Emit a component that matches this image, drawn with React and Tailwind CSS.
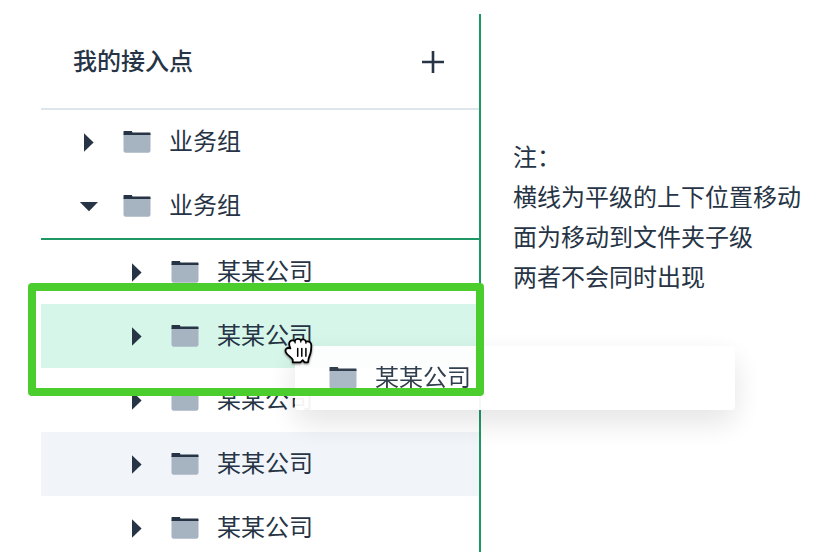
import React from "react";

function Folder() {
  return (
    <svg className="block h-6 w-7 shrink-0" viewBox="0 0 28 24">
      <path d="M.5 4H27.5V20.5Q27.5 22.7 25.3 22.7H2.7Q.5 22.7 .5 20.5Z" fill="#a6b4c2" />
      <path d="M.5 5V1.5Q.5 1 1 1H8.8L9.5 2.5H27Q27.5 2.5 27.5 3V5Z" fill="#263445" />
    </svg>
  );
}

function Arrow({ open }) {
  return (
    <svg className="block h-5 w-5 shrink-0" viewBox="0 0 20 20">
      <path d={open ? "M.8 6H19L10 15.2Z" : "M5 1.2L14.6 10.5L5 19.8Z"} fill="#263445" />
    </svg>
  );
}

function Row({ label, nested, open, tone = "" }) {
  return (
    <div className={`flex h-16 shrink-0 items-center ${nested ? "pl-[86px]" : "pl-[38px]"} ${tone}`}>
      <Arrow open={open} />
      <span className="ml-6"><Folder /></span>
      <span className="ml-[18px] whitespace-nowrap pb-1 leading-8">{label}</span>
    </div>
  );
}

function Hand() {
  return (
    <svg className="absolute left-[282px] top-[334px] h-9 w-9 drop-shadow-[0_1px_1px_rgba(0,0,0,0.5)]" viewBox="0 0 36 36">
      <path
        d="M10.8 28.3V25.9C9.6 23.5 7 22.3 5 20C3.3 18 3.1 16.2 4.2 14.9C5.2 13.8 6.8 13.8 8.4 14.4C7.3 12.2 6.7 9.9 7.6 8.2C8.5 6.4 11.1 5.7 12.8 7.2C13.3 4.5 17.4 3.9 18.8 6.3C20.5 4.7 23.3 5.3 24 7.7C26.6 6.8 29.4 8.3 29.3 11.5C29.3 15.5 29.2 18.3 27.7 21.5C26.8 23.5 26.2 25.6 26 28.3H22.6L20.7 26.2L18.4 28.3Z"
        fill="#fff" stroke="#000" strokeWidth="1.8" strokeLinejoin="round"
      />
      <path d="M12.8 7.2L13.2 8.8M18.8 6.3V8M24 7.7L23.9 9.2" fill="none" stroke="#000" strokeWidth="1.3" strokeLinecap="round" />
      <path d="M15.7 14.5V22.2M19.8 14.5V22.2M23.9 14.5V22.2" fill="none" stroke="#000" strokeWidth="1.5" strokeLinecap="round" />
    </svg>
  );
}

export default function App() {
  return (
    <main className="relative flex h-[552px] w-[830px] overflow-hidden bg-white pl-[41px] pt-[14px] font-['Noto_Sans_CJK_SC',sans-serif] text-2xl text-[#263445]">
      <section className="flex h-[538px] w-[440px] shrink-0 flex-col overflow-hidden border-r-2 border-[#1f9765]">
        <header className="flex h-24 shrink-0 items-center justify-between border-b-2 border-[#dee6ed] pl-8 pr-[34px]">
          <h1 className="pb-0.5 font-medium leading-8">我的接入点</h1>
          <svg className="h-6 w-6" viewBox="0 0 24 24">
            <path d="M1 13H23M12 2V24" stroke="#263445" strokeWidth="2.6" />
          </svg>
        </header>
        <Row label="业务组" />
        <Row label="业务组" open />
        <div className="h-0.5 shrink-0 bg-[#1f9765]" />
        <Row label="某某公司" nested />
        <Row label="某某公司" nested tone="bg-[#d7f6ea]" />
        <Row label="某某公司" nested />
        <Row label="某某公司" nested tone="bg-[#f1f5fa]" />
        <Row label="某某公司" nested />
      </section>
      <aside className="ml-8 mt-[122px] whitespace-nowrap leading-10">
        <p>注：</p>
        <p>横线为平级的上下位置移动</p>
        <p>面为移动到文件夹子级</p>
        <p>两者不会同时出现</p>
      </aside>
      <div className="absolute left-[295px] top-[346px] flex h-16 w-[440px] items-center rounded bg-white pl-[34px] opacity-[0.94] shadow-[0_12px_32px_rgba(0,0,0,0.12)]">
        <Folder />
        <span className="ml-[18px] pb-1 leading-8">某某公司</span>
      </div>
      <div className="absolute left-7 top-[283px] h-[113px] w-[456px] rounded border-8 border-[#4bcd2e]" />
      <Hand />
    </main>
  );
}
